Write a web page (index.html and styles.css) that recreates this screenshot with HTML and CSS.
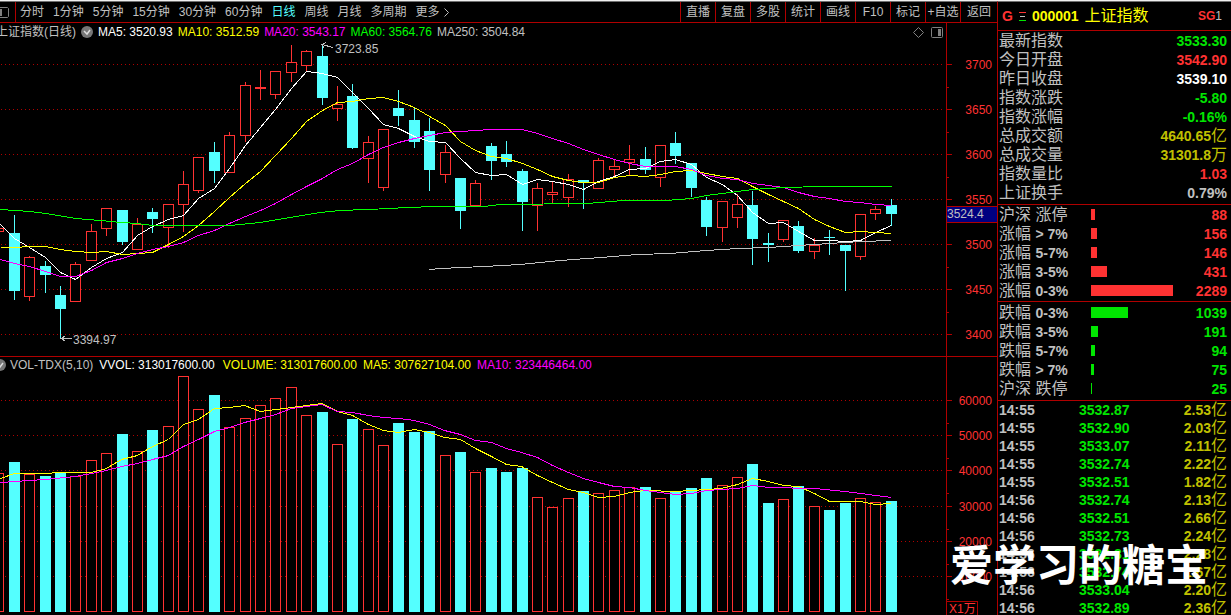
FILE: index.html
```html
<!DOCTYPE html>
<html lang="zh-CN">
<head>
<meta charset="utf-8">
<title>上证指数 日线</title>
<link rel="stylesheet" href="styles.css">
</head>
<body>
<div class="terminal">
  <main class="workspace">
    <div class="toolbar">
      <button class="pane-toggle" aria-label="侧栏">
        <svg width="9" height="11" viewBox="0 0 9 11"><path d="M0 .5h7.500l1 1v8l-1 1H0" fill="none" stroke="#808080"/><path d="M0 2h2v7H0z" fill="#808080"/></svg>
      </button>
      <nav class="periods">
        <button>分时</button><button>1分钟</button><button>5分钟</button><button>15分钟</button><button>30分钟</button><button>60分钟</button><button class="active">日线</button><button>周线</button><button>月线</button><button>多周期</button><button>更多<svg class="more" width="6" height="9" viewBox="0 0 6 9"><path d="M.5 .5l4 4-4 4" fill="none" stroke="#c0c0c0"/></svg></button>
      </nav>
      <div class="tools">
        <button>直播</button><button>复盘</button><button>多股</button><button>统计</button><button>画线</button><button>F10</button><button>标记</button><button>+自选</button><button class="back">返回</button>
      </div>
    </div>

    <section class="pane price-pane">
      <header class="legend">
        <span class="series-name">上证指数(日线)</span>
        <svg class="check" width="12" height="12" viewBox="0 0 12 12"><circle cx="6" cy="6" r="6" fill="#777"/><path d="M3 5l3 3 3-4" fill="none" stroke="#ddd" stroke-width="1.500"/></svg>
        <span class="white">MA5: 3520.93</span><span class="yellow">MA10: 3512.59</span><span class="magenta">MA20: 3543.17</span><span class="lime">MA60: 3564.76</span><span>MA250: 3504.84</span>
        <span class="legend-tools">
          <svg width="11" height="11" viewBox="0 0 11 11"><path d="M5.500 .5l5 5-5 5-5-5z" fill="none" stroke="#808080"/></svg>
          <svg width="12" height="11" viewBox="0 0 12 11"><rect x=".5" y=".5" width="11" height="10" rx="1" fill="none" stroke="#808080"/><path d="M7 2h3v7H7z" fill="#808080"/></svg>
        </span>
      </header>
      <svg class="plot" id="price" viewBox="0 41 946 315" preserveAspectRatio="none"></svg>
      <svg class="axis" id="price-axis" viewBox="946 23 51 333" preserveAspectRatio="none"></svg>
    </section>

    <section class="pane volume-pane">
      <header class="legend volume-legend">
        <svg class="check half" width="12" height="12" viewBox="0 0 12 12"><circle cx="6" cy="6" r="6" fill="#777"/><path d="M3 5l3 3 3-4" fill="none" stroke="#ddd" stroke-width="1.500"/></svg>
        <span>VOL-TDX(5,10)</span><span class="white vvol">VVOL: 313017600.00</span><span class="yellow">VOLUME: 313017600.00</span><span class="yellow">MA5: 307627104.00</span><span class="magenta">MA10: 323446464.00</span>
      </header>
      <svg class="plot" id="volume" viewBox="0 373 946 242" preserveAspectRatio="none"></svg>
      <svg class="axis" id="volume-axis" viewBox="946 357 51 258" preserveAspectRatio="none"></svg>
    </section>
  </main>

  <aside class="quote">
    <header class="quote-head">
      <b class="red">G</b>
      <svg width="7" height="9" viewBox="0 0 7 9"><path d="M0 .5h7" stroke="#ff3232"/><path d="M1 4.500h5" stroke="#c0c0c0"/><path d="M0 8.500h7" stroke="#00e600"/></svg>
      <b class="code">000001</b>
      <span class="name">上证指数</span>
      <span class="tag"><b class="red">SG</b>1</span>
    </header>
    <table class="facts">
      <tr><th>最新指数</th><td class="green">3533.30</td></tr>
      <tr><th>今日开盘</th><td class="red">3542.90</td></tr>
      <tr><th>昨日收盘</th><td class="white">3539.10</td></tr>
      <tr><th>指数涨跌</th><td class="green">-5.80</td></tr>
      <tr><th>指数涨幅</th><td class="green">-0.16%</td></tr>
      <tr><th>总成交额</th><td class="gold">4640.65<span class="unit">亿</span></td></tr>
      <tr><th>总成交量</th><td class="gold">31301.8<span class="unit">万</span></td></tr>
      <tr><th>指数量比</th><td class="red">1.03</td></tr>
      <tr><th>上证换手</th><td>0.79%</td></tr>
    </table>
    <table class="spread up">
      <tr><th>沪深 涨停</th><td><i class="bar" style="width:4px"></i></td><td>88</td></tr>
      <tr><th>涨幅 <b>&gt; 7%</b></th><td><i class="bar" style="width:6px"></i></td><td>156</td></tr>
      <tr><th>涨幅 <b>5-7%</b></th><td><i class="bar" style="width:6px"></i></td><td>146</td></tr>
      <tr><th>涨幅 <b>3-5%</b></th><td><i class="bar" style="width:16px"></i></td><td>431</td></tr>
      <tr><th>涨幅 <b>0-3%</b></th><td><i class="bar" style="width:82px"></i></td><td>2289</td></tr>
    </table>
    <table class="spread down">
      <tr><th>跌幅 <b>0-3%</b></th><td><i class="bar" style="width:37px"></i></td><td>1039</td></tr>
      <tr><th>跌幅 <b>3-5%</b></th><td><i class="bar" style="width:7px"></i></td><td>191</td></tr>
      <tr><th>跌幅 <b>5-7%</b></th><td><i class="bar" style="width:4px"></i></td><td>94</td></tr>
      <tr><th>跌幅 <b>&gt; 7%</b></th><td><i class="bar" style="width:3px"></i></td><td>75</td></tr>
      <tr><th>沪深 跌停</th><td><i class="bar" style="width:1px"></i></td><td>25</td></tr>
    </table>
    <div class="tick-window">
    <table class="ticks">
      <tr><td>14:55</td><td class="green">3532.87</td><td class="gold">2.53<span class="unit">亿</span></td></tr>
      <tr><td>14:55</td><td class="green">3532.90</td><td class="gold">2.03<span class="unit">亿</span></td></tr>
      <tr><td>14:55</td><td class="green">3533.07</td><td class="gold">2.11<span class="unit">亿</span></td></tr>
      <tr><td>14:55</td><td class="green">3532.74</td><td class="gold">2.22<span class="unit">亿</span></td></tr>
      <tr><td>14:55</td><td class="green">3532.51</td><td class="gold">1.82<span class="unit">亿</span></td></tr>
      <tr><td>14:56</td><td class="green">3532.74</td><td class="gold">2.13<span class="unit">亿</span></td></tr>
      <tr><td>14:56</td><td class="green">3532.51</td><td class="gold">2.66<span class="unit">亿</span></td></tr>
      <tr><td>14:56</td><td class="green">3532.73</td><td class="gold">2.24<span class="unit">亿</span></td></tr>
      <tr><td>14:56</td><td class="green">3532.81</td><td class="gold">2.28<span class="unit">亿</span></td></tr>
      <tr><td>14:56</td><td class="green">3532.74</td><td class="gold">1.67<span class="unit">亿</span></td></tr>
      <tr><td>14:56</td><td class="green">3533.04</td><td class="gold">2.20<span class="unit">亿</span></td></tr>
      <tr><td>14:56</td><td class="green">3532.89</td><td class="gold">2.36<span class="unit">亿</span></td></tr>
    </table>
    </div>
  </aside>
  <div class="watermark">爱学习的糖宝</div>
</div>
<script src="chart.js"></script>
</body>
</html>
```
FILE: styles.css
```css
* { box-sizing: border-box; }

body {
  margin: 0;
  background: #000;
  color: #c0c0c0;
  font: 12px/16px "Liberation Sans", "Noto Sans CJK SC", sans-serif;
}

button {
  padding: 0;
  border: 0;
  background: none;
  color: inherit;
  font: inherit;
  white-space: nowrap;
}

svg { display: block; flex: none; }

.white { color: #fff; }
.yellow { color: #ff0; }
.magenta { color: #f0f; }
.lime { color: #0f0; }
.red { color: #ff3232; }
.green { color: #00e600; }
.gold { color: #c0c000; }

.terminal {
  position: relative;
  display: grid;
  grid-template-columns: minmax(0, 1fr) 234px;
  height: 100vh;
  overflow: hidden;
  border-top: 1px solid #f0f0f0;
}

.workspace {
  display: grid;
  grid-template-rows: 21px minmax(0, 334fr) minmax(0, 258fr);
  min-width: 0;
  min-height: 0;
  border-top: 1px solid #707070;
}

.toolbar {
  display: flex;
  align-items: stretch;
  border-bottom: 1px solid #b00000;
}

.pane-toggle {
  display: flex;
  align-items: center;
  width: 16px;
  border-right: 1px solid #b00000;
}

.periods {
  display: flex;
  gap: 9px;
  flex: 1;
  padding-left: 4px;
}

.periods button { display: flex; align-items: center; }
.periods .active { color: #54ffff; }
.more { margin-left: 4px; }

.tools { display: flex; }
.tools button { width: 35px; border-left: 1px solid #b00000; }
.tools .back { width: 37px; }

.pane {
  display: grid;
  grid-template-columns: minmax(0, 1fr) 51px;
  min-height: 0;
}

.price-pane { grid-template-rows: 18px minmax(0, 1fr); border-bottom: 1px solid #b00000; }
.volume-pane { grid-template-rows: 16px minmax(0, 1fr); }

.legend {
  display: flex;
  align-items: center;
  gap: 5px;
  overflow: hidden;
  white-space: nowrap;
}

.series-name { margin-left: -4px; }
.volume-legend { gap: 6px; }
.half { margin-left: -6px; margin-right: -2px; }
.vvol { margin-right: 2px; }
.legend-tools { display: flex; gap: 7px; margin-left: auto; padding-right: 3px; }

.plot { width: 100%; height: 100%; min-height: 0; }
.axis { width: 51px; height: 100%; min-height: 0; grid-column: 2; grid-row: 1 / 3; }

.quote {
  display: flex;
  flex-direction: column;
  min-height: 0;
  border-top: 1px solid #707070;
  border-left: 1px solid #b00000;
  font-size: 14px;
}

.quote-head {
  display: flex;
  align-items: center;
  gap: 6px;
  flex: none;
  height: 29px;
  padding: 0 9px 0 4px;
  border-bottom: 1px solid #b00000;
}

.code { color: #ff0; }
.name { color: #ff0; font-size: 16px; }
.tag { margin-left: auto; font-size: 12px; }

table { width: 100%; border-collapse: collapse; table-layout: fixed; }
th, td { height: 19px; padding: 0; line-height: 16px; white-space: nowrap; }
th { text-align: left; font-weight: 400; font-size: 16px; }
th b { font-size: 14px; }
td { text-align: right; font-weight: 700; }
.unit { font-size: 16px; font-weight: 400; line-height: 14px; }

.facts, .spread {
  display: block;
  flex: none;
  padding: 0 4px 0 1px;
  border-bottom: 1px solid #b00000;
}

.facts tbody, .spread tbody { display: block; }
.facts tr, .spread tr { display: flex; align-items: center; height: 19px; }
.facts th, .spread th, .facts td, .spread td { display: flex; align-items: center; }
.facts td { margin-left: auto; }
.facts { padding-bottom: 2px; }

.spread th { width: 92px; color: #c0c0c0; white-space: pre; }
.spread td:last-child { margin-left: auto; }
.spread.up { color: #ff3232; padding-bottom: 1px; }
.spread.down { color: #00e600; padding-top: 1px; padding-bottom: 2px; }
.bar { display: block; height: 11px; background: currentColor; }

.tick-window { flex: 1; min-height: 0; overflow: hidden; padding: 0 4px 0 1px; }
.ticks td { height: 18px; line-height: 16px; }
.ticks td:first-child { width: 80px; text-align: left; }
.ticks td:nth-child(2) { width: 56px; text-align: left; }

.watermark {
  position: absolute;
  right: 23px;
  bottom: 24px;
  color: #fff;
  font: 700 43px/58px "Noto Sans CJK SC", sans-serif;
  white-space: nowrap;
}

.plot text, .axis text { font-size: 12px; }
```
FILE: chart.js
```js
const RED = '#ff3232', CYAN = '#54ffff', LINE = '#b00000';
const STEP = 877 / 57;
const xAt = i => Math.floor(14.3 + i * STEP);

// [direction, high, body top, body bottom, low, volume top]
const days = [
  ['r',228,228,231,231,473],
  ['c',215,233,291,299,462],['r',256,257,296,300,474],['c',261,266,275,292,476],['c',286,295,309,337,473],
  ['r',262,264,301,301,476],['r',224,231,260,260,460],['r',208,208,228,235,453],['c',210,210,242,244,434],
  ['r',218,224,249,249,451],['c',208,212,219,232,430],['r',204,204,227,247,426],['r',171,184,204,231,376],
  ['r',157,157,190,192,409],['c',142,152,171,182,395],['r',132,135,172,172,427],['r',82,85,135,141,418],
  ['r',70,87,88,99,405],['r',71,71,94,98,398],['r',45,62,72,81,387],['r',50,51,65,71,415],
  ['c',45,56,98,104,412],['r',86,104,108,120,444],['c',84,96,148,148,419],['r',136,142,158,182,429],
  ['r',129,129,187,190,445],['c',90,108,116,125,423],['c',108,120,142,147,432],['c',118,131,170,190,431],
  ['r',145,152,174,182,455],['c',178,178,211,228,452],['r',180,183,205,205,472],['c',143,146,161,179,468],
  ['c',141,154,162,166,472],['c',169,171,202,230,468],['r',183,188,205,230,497],['r',182,192,194,202,507],
  ['r',174,179,197,206,498],['c',180,180,183,208,491],['r',158,160,188,188,493],['r',160,166,169,176,490],
  ['r',145,159,162,175,487],['c',147,159,170,173,487],['r',145,145,177,186,498],['c',132,143,156,163,491],
  ['c',163,163,188,196,488],['c',197,200,227,235,478],['r',201,201,227,241,485],['r',194,204,217,227,477],
  ['c',191,205,239,264,464],['c',233,243,245,261,503],['r',220,220,239,241,499],['c',221,226,251,252,486],
  ['r',238,245,251,258,506],['c',230,237,238,254,510],['c',245,245,251,290,503],['r',214,214,256,259,498],
  ['r',206,209,213,219,502],['c',199,205,214,225,501]
];

// moving averages, one value per day starting at the left edge
const ma5 = [224,238,247,257,272,279,267,258,252,235,226,219,215,198,188,168,145,127,109,88,71,73,77,92,108,124,128,136,141,142,158,172,175,174,184,179,181,184,189,181,176,169,168,161,159,164,177,184,195,212,223,222,231,240,240,241,240,232,225];
const ma10 = [247,247,246,246,249,251,252,251,254,253,252,244,236,225,211,197,183,171,155,138,121,110,102,101,98,97,101,107,116,125,141,150,156,158,163,169,176,180,182,182,177,175,176,174,171,170,173,176,178,186,194,201,208,219,226,232,231,232,233];
const ma20 = [259,263,266,271,276,276,270,262,258,253,249,246,242,235,230,223,216,210,203,194,186,178,169,163,154,147,142,138,135,132,131,130,129,129,129,133,138,143,149,154,159,163,166,166,166,169,175,178,179,183,185,187,192,196,198,201,202,204,205];
const daily = values => values.map((y, i) => [i ? xAt(i - 1) : 0, y]);

const ma60 = [[0,209],[30,211],[45,213],[75,218],[100,220],[121,222],[137,223],[152,225],[229,225],[260,222],[290,217],[320,212],[340,210],[391,208],[405,207],[437,206],[483,206],[500,204],[587,203],[623,200],[665,200],[691,198],[706,195],[737,191],[752,189],[783,187],[822,186],[891,186]];
const ma250 = [[429,269],[440,268],[483,266],[520,264],[560,260],[600,257],[637,254],[670,253],[706,250],[737,248],[768,247],[798,245],[829,243],[860,241],[891,240]];
const vol5 = [[0,478],[14,473],[44,473],[60,472],[91,472],[106,468],[121,459],[137,455],[152,446],[168,439],[183,424],[198,419],[214,408],[229,407],[244,405],[260,411],[291,407],[306,405],[321,403],[337,411],[352,415],[368,424],[383,430],[398,432],[414,429],[429,432],[444,437],[460,439],[475,448],[491,456],[506,464],[521,466],[537,475],[552,482],[568,489],[583,492],[598,497],[614,496],[629,492],[645,490],[675,491],[706,489],[721,488],[737,484],[752,478],[768,481],[783,485],[798,486],[814,493],[829,501],[860,501],[875,504],[891,503]];
const vol10 = [[0,482],[29,480],[44,479],[75,476],[91,473],[106,470],[121,466],[137,463],[152,459],[168,455],[183,446],[198,439],[214,431],[229,427],[244,422],[260,418],[275,414],[291,408],[306,406],[321,404],[337,411],[352,412],[368,415],[383,417],[398,418],[414,420],[429,424],[444,430],[460,434],[475,440],[491,442],[506,448],[521,452],[537,457],[552,465],[568,472],[583,478],[598,482],[614,486],[629,487],[645,490],[660,492],[675,494],[691,493],[706,490],[721,489],[737,488],[752,485],[768,487],[814,488],[845,491],[891,497]];

const path = (d, color, extra = '') =>
  `<path d="${d}" fill="none" stroke="${color}" shape-rendering="crispEdges" ${extra}/>`;
const curve = (pts, color) => path('M' + pts.map(([x, y]) => `${x + .5} ${y + .5}`).join('L'), color);
const grid = ys => ys.map(y => path(`M1 ${y + .5}H943`, LINE, 'stroke-dasharray="1 3"')).join('');
const label = (x, y, s, color, anchor = 'start') => `<text x="${x}" y="${y}" fill="${color}" text-anchor="${anchor}">${s}</text>`;
const box = (dir, x, top, bottom) => dir === 'r'
  ? `<rect x="${x - 4.5}" y="${top + .5}" width="10" height="${Math.max(1, bottom - top)}" fill="#000" stroke="${RED}" shape-rendering="crispEdges"/>`
  : `<rect x="${x - 5}" y="${top}" width="11" height="${Math.max(1, bottom - top)}" fill="${CYAN}" shape-rendering="crispEdges"/>`;

const priceLevels = [64, 109, 154, 199, 244, 289, 334];
const volumeLevels = [400, 435, 470, 506, 541, 576];

let candles = '', bars = '';
days.forEach(([dir, high, top, bottom, low, vol], n) => {
  const x = xAt(n - 1);
  candles += path(`M${x + .5} ${high}V${low + 1}`, dir === 'r' ? RED : CYAN) + box(dir, x, top, bottom);
  bars += box(dir, x, vol, dir === 'r' ? 611 : 612);
});

document.getElementById('price').innerHTML = grid(priceLevels) + candles +
  curve(daily(ma5), '#fff') + curve(daily(ma10), '#ff0') + curve(daily(ma20), '#f0f') +
  curve(ma60, '#0f0') + curve(ma250, '#c0c0c0') +
  path('M60 338.5H72M65.500 335.500L61.500 338.500L65.500 341.500', '#c0c0c0') + label(73, 344, '3394.97', '#c0c0c0') +
  path('M322 44.500L333 47.500M326 42.500L322 44.500L324 48', '#c0c0c0') + label(335, 53, '3723.85', '#c0c0c0');

document.getElementById('volume').innerHTML = grid(volumeLevels) + bars + curve(vol5, '#ff0') + curve(vol10, '#f0f');

const axis = (levels, from, to, names) => path(`M946.500 ${from}V${to}`, LINE) +
  levels.map((y, i) => path(`M946 ${y + .5}h6M946 ${y + 23.5}h3`, LINE) + label(992, y + 5, names[i], RED, 'end')).join('');

document.getElementById('price-axis').innerHTML =
  axis(priceLevels, 23, 356, [3700, 3650, 3600, 3550, 3500, 3450, 3400]) +
  '<rect x="947" y="207" width="50" height="15" fill="#000080"/>' +
  path('M947 206.500h50M947 222.500h50', LINE) + label(947, 218, '3524.4', '#c0c0c0');

document.getElementById('volume-axis').innerHTML =
  axis(volumeLevels, 357, 615, [60000, 50000, 40000, 30000, 20000, 10000]) +
  '<rect x="946.5" y="601.5" width="31" height="15" fill="#000" stroke="#b00000"/>' + label(949, 613, 'X1万', RED);
```
